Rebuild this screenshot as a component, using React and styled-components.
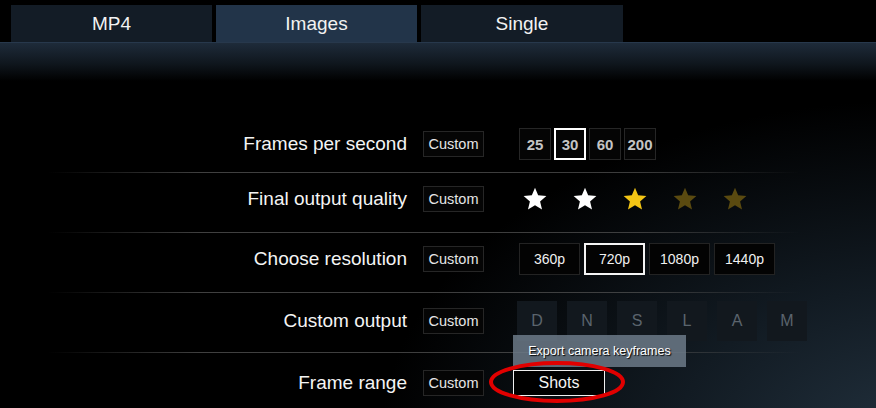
import React from "react";
import styled, { createGlobalStyle } from "styled-components";

const Global = createGlobalStyle`
  html, body { margin: 0; padding: 0; background: #000; }
  body { font-family: "Liberation Sans", Arial, sans-serif; }
`;

const Page = styled.div`
  width: 876px;
  height: 408px;
  overflow: hidden;
  background:
    radial-gradient(ellipse 540px 340px at 920px 440px, #22313e 0%, #121b23 45%, rgba(0,0,0,0) 100%),
    #000;
  color: #fff;
`;

const TabBar = styled.div`
  display: flex;
  gap: 4px;
  padding: 5px 0 0 11px;
  height: 37px;
  background: #000;
`;

const Tab = styled.div`
  width: ${(p) => p.$w || 201}px;
  height: 37px;
  line-height: 38px;
  text-align: center;
  font-size: 19px;
  color: #f2f2f2;
  background: ${(p) => (p.$active ? "#223449" : "#131c26")};
`;

const Band = styled.div`
  height: 38px;
  border-top: 1px solid #27384c;
  background: linear-gradient(to bottom, #1e2b3a 0%, #0f161d 55%, rgba(0,0,0,0) 100%);
`;

const Spacer = styled.div`
  height: 32px;
`;

const Row = styled.div`
  display: flex;
  align-items: center;
  height: 59px;
  box-sizing: border-box;
  padding-top: ${(p) => p.$pt || 0}px;
  padding-bottom: ${(p) => p.$pb || 0}px;
`;

const Separator = styled.div`
  height: 1px;
  background: linear-gradient(to right, rgba(80,80,80,0) 48px, rgba(85,85,85,0.75) 200px, rgba(85,85,85,0.7) 640px, rgba(85,85,85,0) 800px);
`;

const Label = styled.div`
  width: 407px;
  text-align: right;
  font-size: 19px;
  color: #f4f4f4;
  flex-shrink: 0;
`;

const CustomBox = styled.div`
  margin-left: 16px;
  width: 61px;
  height: 26px;
  box-sizing: border-box;
  border: 1px solid #262626;
  background: #050505;
  font-size: 14.5px;
  color: #e6e6e6;
  display: flex;
  align-items: center;
  justify-content: center;
  flex-shrink: 0;
`;

const Controls = styled.div`
  display: flex;
  align-items: center;
  gap: ${(p) => p.$gap}px;
  margin-left: ${(p) => p.$ml}px;
`;

const FpsBtn = styled.div`
  width: 32px;
  height: 32px;
  box-sizing: border-box;
  border: ${(p) => (p.$active ? "2px solid #fff" : "1px solid #262626")};
  background: #050505;
  color: #c4c4c4;
  font-size: 15px;
  font-weight: bold;
  display: flex;
  align-items: center;
  justify-content: center;
`;

const ResBtn = styled.div`
  width: 61px;
  height: 32px;
  box-sizing: border-box;
  border: ${(p) => (p.$active ? "2px solid #f4f4f4" : "1px solid #232323")};
  background: #030303;
  color: #f0f0f0;
  font-size: 14px;
  display: flex;
  align-items: center;
  justify-content: center;
`;

const LetterBtn = styled.div`
  width: 40px;
  height: 40px;
  background: #12181e;
  color: #5b646d;
  font-size: 16px;
  display: flex;
  align-items: center;
  justify-content: center;
`;

const StarIcon = styled.svg`
  width: 26px;
  height: 26px;
  display: block;
`;

const ShotsWrap = styled.div`
  position: relative;
`;

const ShotsBtn = styled.div`
  width: 92px;
  height: 26px;
  box-sizing: border-box;
  border: 1px solid #f0f0f0;
  background: #000;
  color: #f4f4f4;
  font-size: 16px;
  display: flex;
  align-items: center;
  justify-content: center;
`;

const Tooltip = styled.div`
  position: absolute;
  left: 0;
  bottom: calc(100% + 3px);
  width: 173px;
  height: 32px;
  background: rgba(108, 122, 136, 0.85);
  color: #fff;
  font-size: 12.5px;
  text-shadow: 1px 1px 1px #000;
  display: flex;
  align-items: center;
  justify-content: center;
  white-space: nowrap;
`;

const Ring = styled.svg`
  position: absolute;
  left: -24px;
  top: -9px;
  width: 136px;
  height: 42px;
  pointer-events: none;
  overflow: visible;
`;

const Star = ({ color }) => (
  <StarIcon viewBox="0 0 24 24">
    <polygon
      points="12,1.5 14.9,8.6 22.5,9.2 16.7,14.2 18.5,21.8 12,17.7 5.5,21.8 7.3,14.2 1.5,9.2 9.1,8.6"
      fill={color}
    />
  </StarIcon>
);

export default function App() {
  return (
    <Page>
      <Global />
      <TabBar>
        <Tab>MP4</Tab>
        <Tab $active>Images</Tab>
        <Tab $w={202}>Single</Tab>
      </TabBar>
      <Band />
      <Spacer />

      <Row $pt={3}>
        <Label>Frames per second</Label>
        <CustomBox>Custom</CustomBox>
        <Controls $ml={35} $gap={3}>
          <FpsBtn>25</FpsBtn>
          <FpsBtn $active>30</FpsBtn>
          <FpsBtn>60</FpsBtn>
          <FpsBtn>200</FpsBtn>
        </Controls>
      </Row>
      <Separator />

      <Row $pb={7}>
        <Label>Final output quality</Label>
        <CustomBox>Custom</CustomBox>
        <Controls $ml={38} $gap={24}>
          <Star color="#ffffff" />
          <Star color="#ffffff" />
          <Star color="#f3c515" />
          <Star color="#5a4a10" />
          <Star color="#5a4a10" />
        </Controls>
      </Row>
      <Separator />

      <Row $pb={7}>
        <Label>Choose resolution</Label>
        <CustomBox>Custom</CustomBox>
        <Controls $ml={35} $gap={4}>
          <ResBtn>360p</ResBtn>
          <ResBtn $active>720p</ResBtn>
          <ResBtn>1080p</ResBtn>
          <ResBtn>1440p</ResBtn>
        </Controls>
      </Row>
      <Separator />

      <Row $pb={3}>
        <Label>Custom output</Label>
        <CustomBox>Custom</CustomBox>
        <Controls $ml={33} $gap={10}>
          {["D", "N", "S", "L", "A", "M"].map((l) => (
            <LetterBtn key={l}>{l}</LetterBtn>
          ))}
        </Controls>
      </Row>
      <Separator />

      <Row>
        <Label>Frame range</Label>
        <CustomBox>Custom</CustomBox>
        <Controls $ml={29} $gap={0}>
          <ShotsWrap>
            <Tooltip>Export camera keyframes</Tooltip>
            <ShotsBtn>Shots</ShotsBtn>
            <Ring viewBox="0 0 136 42">
              <ellipse cx="68" cy="21" rx="66" ry="19" fill="none" stroke="#e10000" strokeWidth="4" />
            </Ring>
          </ShotsWrap>
        </Controls>
      </Row>
    </Page>
  );
}
